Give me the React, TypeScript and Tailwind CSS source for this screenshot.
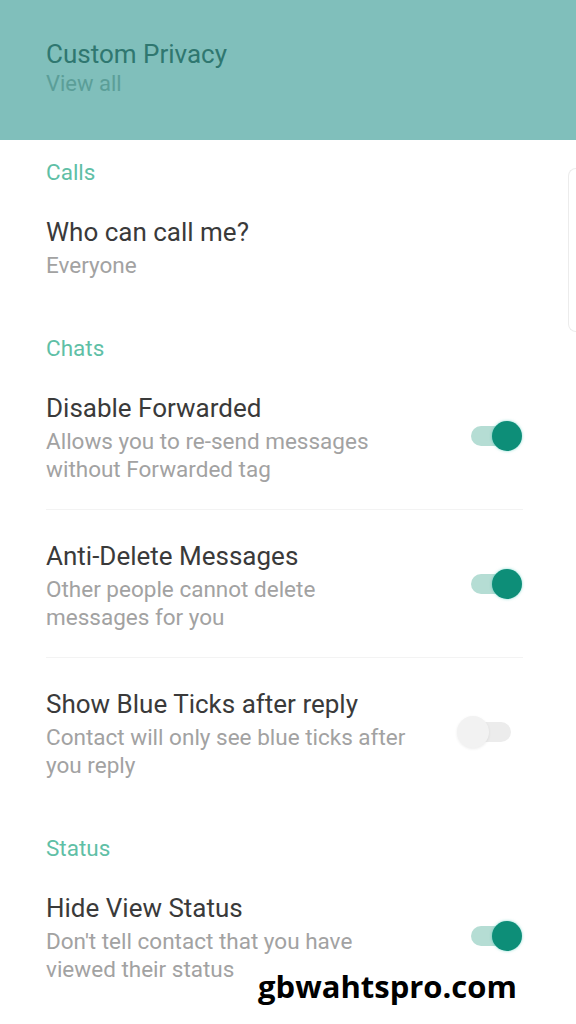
import React from 'react';

type Item = {
  title: string;
  lines: string[];
  toggle?: 'on' | 'off';
};

type Section = {
  label: string;
  items: Item[];
};

const sections: Section[] = [
  {
    label: 'Calls',
    items: [{ title: 'Who can call me?', lines: ['Everyone'] }],
  },
  {
    label: 'Chats',
    items: [
      {
        title: 'Disable Forwarded',
        lines: ['Allows you to re-send messages', 'without Forwarded tag'],
        toggle: 'on',
      },
      {
        title: 'Anti-Delete Messages',
        lines: ['Other people cannot delete', 'messages for you'],
        toggle: 'on',
      },
      {
        title: 'Show Blue Ticks after reply',
        lines: ['Contact will only see blue ticks after', 'you reply'],
        toggle: 'off',
      },
    ],
  },
  {
    label: 'Status',
    items: [
      {
        title: 'Hide View Status',
        lines: ["Don't tell contact that you have", 'viewed their status'],
        toggle: 'on',
      },
    ],
  },
];

function Toggle({ on }: { on: boolean }) {
  return (
    <div className="relative w-[66px] h-[32px] shrink-0">
      <div
        className={
          'absolute left-[14px] top-[6px] w-[40px] h-[20px] rounded-full ' +
          (on ? 'bg-[#b5ddd4]' : 'bg-[#ececec]')
        }
      />
      {on ? (
        <div className="absolute left-[35px] top-[1px] w-[30px] h-[30px] rounded-full bg-[#0d8e78] shadow-[0_0_3px_rgba(0,180,160,0.5)]" />
      ) : (
        <div className="absolute left-0 top-0 w-[32px] h-[32px] rounded-full bg-[#f2f2f2] shadow-[0_1px_3px_rgba(0,0,0,0.08)]" />
      )}
    </div>
  );
}

function Row({ item, divider }: { item: Item; divider: boolean }) {
  return (
    <div className={'flex items-center mr-[53px] ' + (divider ? 'border-b border-[#f3f3f3]' : '')}>
      <div className="flex-1 pt-[30px] pb-[26px]">
        <div className="text-[26px] leading-[32px] text-[#3a3a3a]">{item.title}</div>
        <div className="mt-[3px] text-[22.5px] leading-[28px] text-[#a2a2a2]">
          {item.lines.map(l => (
            <div key={l} className="whitespace-nowrap">{l}</div>
          ))}
        </div>
      </div>
      {item.toggle && <Toggle on={item.toggle === 'on'} />}
    </div>
  );
}

export default function App() {
  return (
    <div className="relative min-h-[1024px] overflow-hidden bg-white font-['Roboto',sans-serif]">
      <div className="h-[140px] bg-[#80bfbb] pl-[46px] pt-[38px]">
        <div className="text-[26px] leading-[32px] text-[#2f7770]">Custom Privacy</div>
        <div className="text-[22px] leading-[28px] text-[#5b9e98]">View all</div>
      </div>

      <div className="pl-[46px]">
        {sections.map((s, si) => (
          <div key={s.label}>
            <div
              className={
                'text-[22.5px] leading-[28px] text-[#5fbfa6] ' + (si === 0 ? 'pt-[18px]' : 'pt-[29px]')
              }
            >
              {s.label}
            </div>
            {s.items.map((it, i) => (
              <Row key={it.title} item={it} divider={i < s.items.length - 1} />
            ))}
          </div>
        ))}
      </div>

      {/* faint scroll handle on the right edge */}
      <div className="absolute right-0 top-[168px] h-[164px] w-[8px] rounded-l-full border border-r-0 border-[#ececec]" />

      {/* watermark */}
      <div className="absolute left-[258px] top-[966px] text-[31px] leading-[40px] font-bold text-black font-['Open_Sans',sans-serif]">
        gbwahtspro.com
      </div>
    </div>
  );
}
